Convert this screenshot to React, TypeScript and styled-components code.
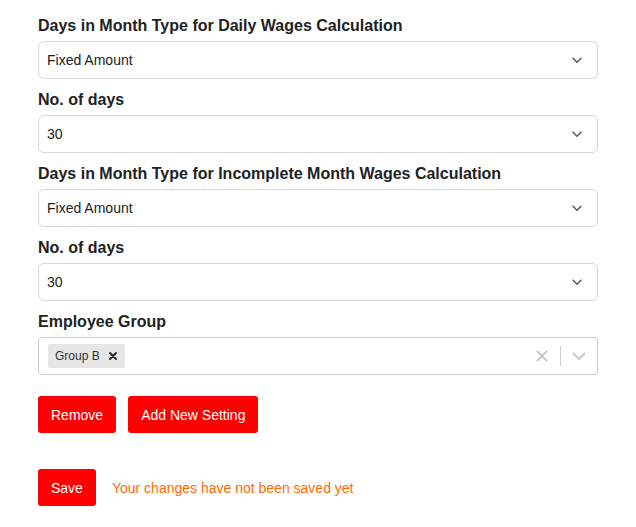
import React from 'react';
import styled, { createGlobalStyle } from 'styled-components';

const GlobalStyle = createGlobalStyle`
  body {
    margin: 0;
    background: #fff;
    font-family: "Liberation Sans", Arial, Helvetica, sans-serif;
    color: #212529;
  }
`;

const fields = [
  { label: 'Days in Month Type for Daily Wages Calculation', value: 'Fixed Amount' },
  { label: 'No. of days', value: '30' },
  { label: 'Days in Month Type for Incomplete Month Wages Calculation', value: 'Fixed Amount' },
  { label: 'No. of days', value: '30' },
];

const Chevron: React.FC<{ color: string; size?: number }> = ({ color, size = 14 }) => (
  <svg width={size} height={size} viewBox="0 0 16 16" fill="none">
    <path d="M3.5 6l4.5 4.5L12.5 6" stroke={color} strokeWidth="1.8" strokeLinecap="round" strokeLinejoin="round" />
  </svg>
);

const App: React.FC = () => {
  return (
    <Wrapper>
      <GlobalStyle />
      {fields.map((f, i) => (
        <Group key={i}>
          <Label>{f.label}</Label>
          <SelectBox>
            <Value>{f.value}</Value>
            <Chevron color="#555c66" />
          </SelectBox>
        </Group>
      ))}
      <Group>
        <Label>Employee Group</Label>
        <MultiBox>
          <TagArea>
            <Tag>
              <TagText>Group B</TagText>
              <TagRemove>
                <svg width="8" height="8" viewBox="0 0 8 8">
                  <path d="M1 1l6 6M7 1L1 7" stroke="#222" strokeWidth="1.8" strokeLinecap="round" />
                </svg>
              </TagRemove>
            </Tag>
          </TagArea>
          <Indicators>
            <Indicator>
              <svg width="20" height="20" viewBox="0 0 20 20">
                <path d="M5.5 5.5l9 9M14.5 5.5l-9 9" stroke="#c8c8c8" strokeWidth="2" strokeLinecap="round" />
              </svg>
            </Indicator>
            <Separator />
            <Indicator>
              <svg width="20" height="20" viewBox="0 0 20 20" fill="none">
                <path d="M4.5 7.5l5.5 5.5 5.5-5.5" stroke="#c8c8c8" strokeWidth="2" strokeLinecap="round" strokeLinejoin="round" />
              </svg>
            </Indicator>
          </Indicators>
        </MultiBox>
      </Group>
      <ButtonRow>
        <RedButton>Remove</RedButton>
        <RedButton>Add New Setting</RedButton>
      </ButtonRow>
      <SaveRow>
        <RedButton>Save</RedButton>
        <Notice>Your changes have not been saved yet</Notice>
      </SaveRow>
    </Wrapper>
  );
};

export default App;

const Wrapper = styled.div`
  width: 560px;
  padding: 14px 38px 0;
`;

const Group = styled.div`
  display: flex;
  flex-direction: column;
  margin-bottom: 9px;
`;

const Label = styled.label`
  font-size: 16px;
  font-weight: 700;
  line-height: 24px;
  color: #222;
  margin-bottom: 3px;
`;

const SelectBox = styled.div`
  height: 38px;
  box-sizing: border-box;
  border: 1px solid #d5d8dc;
  border-radius: 6px;
  display: flex;
  align-items: center;
  justify-content: space-between;
  padding: 0 13px 0 8px;
`;

const Value = styled.span`
  font-size: 14px;
  color: #222;
`;

const MultiBox = styled.div`
  height: 38px;
  box-sizing: border-box;
  border: 1px solid #cccccc;
  border-radius: 4px;
  display: flex;
  align-items: center;
`;

const TagArea = styled.div`
  flex: 1;
  padding: 0 9px;
  display: flex;
`;

const Tag = styled.div`
  display: flex;
  align-items: center;
  background: #e6e6e6;
  border-radius: 2px;
  height: 24px;
`;

const TagText = styled.span`
  font-size: 12px;
  color: #333;
  padding: 0 4px 0 7px;
`;

const TagRemove = styled.span`
  display: flex;
  align-items: center;
  padding: 0 8px 0 5px;
`;

const Indicators = styled.div`
  display: flex;
  align-items: center;
  height: 100%;
`;

const Indicator = styled.span`
  display: flex;
  align-items: center;
  padding: 0 8px;
`;

const Separator = styled.span`
  width: 1px;
  height: 20px;
  background: #cccccc;
`;

const ButtonRow = styled.div`
  display: flex;
  gap: 12px;
  margin-top: 21px;
`;

const SaveRow = styled.div`
  display: flex;
  align-items: center;
  gap: 16px;
  margin-top: 36px;
`;

const RedButton = styled.button`
  background: #ff0000;
  color: #fff;
  border: none;
  border-radius: 3px;
  height: 37px;
  padding: 0 13px;
  font-family: "Liberation Sans", Arial, sans-serif;
  font-size: 14px;
  font-weight: 500;
`;

const Notice = styled.span`
  font-size: 14px;
  color: #ff6a00;
`;
